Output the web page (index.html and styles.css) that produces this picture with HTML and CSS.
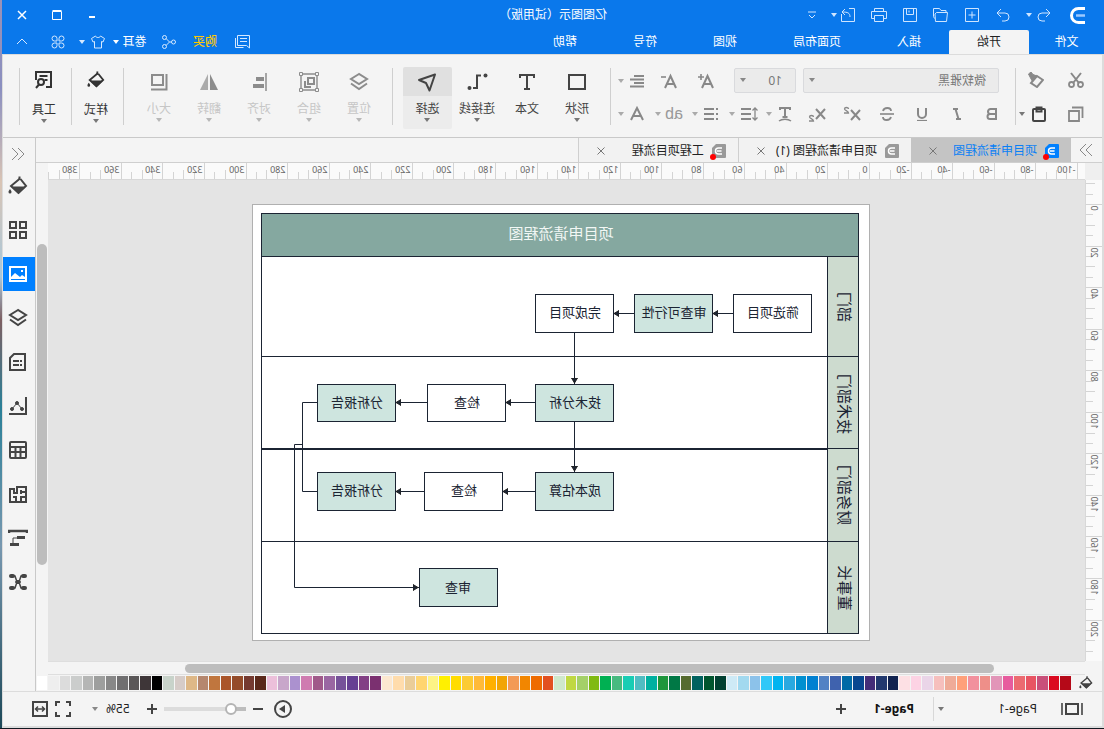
FILE: index.html
```html
<!DOCTYPE html>
<html lang="zh-CN">
<head>
<meta charset="utf-8">
<title>亿图图示（试用版）</title>
<link rel="stylesheet" href="styles.css">
</head>
<body>
<svg class="defs" aria-hidden="true">
  <symbol id="caret" viewBox="0 0 6 4"><path d="M0 0h6L3 4z" fill="currentColor"/></symbol>
  <symbol id="bucket" viewBox="0 0 20 20"><path d="M7.500 3L2 10l7.500 7L17 10 8 2.500" fill="none" stroke="currentColor" stroke-width="2"/><path d="M2 10.500h15l-7.500 7.500z" fill="currentColor"/><path d="M8.500 4V.5" stroke="currentColor" stroke-width="2"/><path d="M18 13c1 1.500 1.500 2 1.500 3a1.500 1.500 0 0 1-3 0c0-1 .5-1.500 1.500-3z" fill="currentColor"/></symbol>
  <symbol id="layers" viewBox="0 0 20 20"><path d="M10 2l8 5-8 5-8-5zM2 11.500l8 5.500 8-5.500" fill="none" stroke="currentColor" stroke-width="2"/></symbol>
  <symbol id="doc" viewBox="0 0 14 14"><path d="M1 0h9l4 4v9a1 1 0 0 1-1 1H1a1 1 0 0 1-1-1V1a1 1 0 0 1 1-1z" fill="currentColor"/><path d="M4 4h3.500a3 3 0 0 1 0 6H4M4.500 7H9" fill="none" stroke="#fff" stroke-width="1.500"/></symbol>
</svg>

<div class="app">
  <header class="top">
    <div class="titlebar">
      <div class="quick">
        <svg class="logo" viewBox="0 0 16 17"><path d="M1 1.500h6.500a7 7 0 0 1 0 14H1" fill="none" stroke="#fff" stroke-width="3"/><path d="M1 8.500h9" stroke="#9cc9ff" stroke-width="2.500"/></svg>
        <button class="qa narrow" aria-label="撤销"><svg class="i14" viewBox="0 0 14 14"><path d="M5 1L1 5l4 4M1 5h8a4 4 0 0 1 0 8H6"/></svg></button>
        <button class="mini" aria-label="撤销列表"><svg class="caret"><use href="#caret"/></svg></button>
        <button class="qa first" aria-label="恢复"><svg class="i14" viewBox="0 0 14 14"><path d="M9 1l4 4-4 4M13 5H5a4 4 0 0 0 0 8h3"/></svg></button>
        <button class="qa" aria-label="新建"><svg class="i14" viewBox="0 0 14 14"><path d="M.5.5h13v13H.5zM7 3.500v7M3.500 7h7"/></svg></button>
        <button class="qa" aria-label="打开"><svg class="i16" viewBox="0 0 16 14"><path d="M1.500 4.500h11l1.500 1.500-.5 7.500h-11zM3 4.500V2.500h5l1.500-2h6v8l-1 2"/></svg></button>
        <button class="qa" aria-label="保存"><svg class="i14" viewBox="0 0 14 14"><path d="M.5.5h13v13H.5zM3.500.5v6h7v-6M8 2.500v2"/></svg></button>
        <button class="qa" aria-label="打印"><svg class="i16" viewBox="0 0 16 14"><path d="M3.500 3.500v-3h9v3M3.500 10.500h-3v-7h15v7h-3M3.500 7.500h9v6h-9z"/></svg></button>
        <button class="qa" aria-label="导出"><svg class="i14" viewBox="0 0 14 14"><path d="M6 .5H.5v13h13V6M5 9c0-4 2-5 8-5M10 1l3 3-3 3"/></svg></button>
        <button class="mini after" aria-label="导出列表"><svg class="caret"><use href="#caret"/></svg></button>
        <button class="qa" aria-label="自定义"><svg class="i8" viewBox="0 0 8 8"><path d="M0 1h8M1 4l3 3 3-3"/></svg></button>
      </div>
      <h1 class="title">亿图图示（试用版）</h1>
      <div class="window">
        <button aria-label="最小化"><svg class="i10" viewBox="0 0 10 10"><path d="M2 7h6" stroke-width="2"/></svg></button>
        <button aria-label="最大化"><svg class="i10" viewBox="0 0 10 10"><path d="M.5 1.500h9v8h-9zM.5.5h9"/></svg></button>
        <button aria-label="关闭"><svg class="i10" viewBox="0 0 10 10"><path d="M1 1l8 8M9 1L1 9" stroke-width="1.500"/></svg></button>
      </div>
    </div>
    <nav class="menubar">
      <button class="file">文件</button>
      <button class="active">开始</button>
      <button>插入</button>
      <button>页面布局</button>
      <button>视图</button>
      <button>符号</button>
      <button>帮助</button>
      <div class="account">
        <button class="w28" aria-label="消息"><svg class="i16" viewBox="0 0 16 14"><path d="M.5.5h12v10h-9l-3 2.500zM3 3.500h7M3 6.500h7M14.500 3v9.500h-8"/></svg></button>
        <button class="buy">购买</button>
        <button class="w26" aria-label="分享"><svg class="i14" viewBox="0 0 14 14"><circle cx="2.500" cy="7" r="2"/><circle cx="11.500" cy="2.500" r="2"/><circle cx="11.500" cy="11.500" r="2"/><path d="M4.500 7h2l3.500-3.500M6.500 7L10 10.500"/></svg></button>
        <button class="user">卷耳<svg class="caret"><use href="#caret"/></svg></button>
        <button class="w20" aria-label="皮肤"><svg class="i14" viewBox="0 0 14 14"><path d="M4.500 1L.5 3.500 2 7l1.500-.5V13h7V6.500L12 7l1.500-3.500-4-2.500C9 3 5 3 4.500 1z"/></svg></button>
        <button class="w12" aria-label="皮肤列表"><svg class="caret"><use href="#caret"/></svg></button>
        <button class="w36" aria-label="应用"><svg class="i14" viewBox="0 0 14 14"><path d="M6 6H3.500A2.500 2.500 0 1 1 6 3.500zM8 6V3.500A2.500 2.500 0 1 1 10.500 6zM6 8v2.500A2.500 2.500 0 1 1 3.500 8zM8 8h2.500A2.500 2.500 0 1 1 8 10.500z"/></svg></button>
        <button class="w36" aria-label="收起功能区"><svg class="i10" viewBox="0 0 10 10"><path d="M0 7l5-5 5 5"/></svg></button>
      </div>
    </nav>
  </header>

  <div class="frame">
    <section class="ribbon">
      <div class="clip">
        <button aria-label="剪切"><svg class="i16" viewBox="0 0 16 16"><path d="M3 1l7.500 9.500M13 1L5.500 10.500" stroke-width="2"/><circle cx="3.500" cy="12.500" r="2.500" stroke-width="1.800"/><circle cx="12.500" cy="12.500" r="2.500" stroke-width="1.800"/></svg></button>
        <button aria-label="格式刷"><svg class="i16" viewBox="0 0 16 16"><path d="M1 8l6-4 6 7-6 4z" stroke-width="2"/><path d="M7 4l4.500 5.500L14 5l1.500-3L13 0l-2 2.500z" fill="currentColor"/></svg></button>
        <button aria-label="复制"><svg class="i16" viewBox="0 0 16 16"><path d="M5 5h10v10H5zM1.500 12V1.500H12" stroke-width="1.800"/></svg></button>
        <button class="paste" aria-label="粘贴"><svg class="i16" viewBox="0 0 16 16"><rect x="2" y="3" width="12" height="12" rx="1" stroke-width="2"/><path d="M5.500 1.500h5v4h-5z" stroke-width="2"/></svg><svg class="caret"><use href="#caret"/></svg></button>
      </div>
      <i class="sep"></i>
      <div class="fonts">
        <div class="row one">
          <label class="combo wide"><select aria-label="字体"><option>微软雅黑</option></select><svg class="caret"><use href="#caret"/></svg></label>
          <label class="combo size"><select aria-label="字号"><option>10</option></select><svg class="caret"><use href="#caret"/></svg></label>
          <button class="w37" aria-label="增大字号"><svg class="i16" viewBox="0 0 16 16"><path d="M1 15L6.500 3 12 15M3 11h7" stroke-width="2"/><path d="M13 1v6M10 4h6" stroke-width="1.600"/></svg></button>
          <button class="w37" aria-label="减小字号"><svg class="i16" viewBox="0 0 16 16"><path d="M1 15L6.500 3 12 15M3 11h7" stroke-width="2"/><path d="M11 4h5" stroke-width="1.600"/></svg></button>
          <button class="dd" aria-label="对齐方式"><svg class="i16" viewBox="0 0 16 16"><path d="M1 3h10M1 6.500h14M1 10h10M1 13.500h14" stroke-width="1.800"/></svg><svg class="caret"><use href="#caret"/></svg></button>
        </div>
        <div class="row two">
          <button class="w35" aria-label="加粗"><svg class="i14" viewBox="0 0 14 14"><path d="M3 2h5.500a2.500 2.500 0 0 1 0 5H3zM3 7h6a2.500 2.500 0 0 1 0 5H3z" stroke-width="2"/></svg></button>
          <button class="w35" aria-label="倾斜"><svg class="i14" viewBox="0 0 14 14"><path d="M6 2h5M3 12h5M8.500 2l-3 10" stroke-width="2"/></svg></button>
          <button class="w35" aria-label="下划线"><svg class="i14" viewBox="0 0 14 14"><path d="M3 1v6a4 4 0 0 0 8 0V1" stroke-width="2"/><path d="M2 13.500h10" stroke-width="1.200"/></svg></button>
          <button class="w35" aria-label="删除线"><svg class="i14" viewBox="0 0 14 14"><path d="M11 4c-1-4-8-4-8 0M3 10c1 4 8 4 8 0" stroke-width="1.800"/><path d="M0 7h14" stroke-width="1.600"/></svg></button>
          <button class="w35" aria-label="上标"><svg class="i18" viewBox="0 0 18 16"><path d="M1 4l9 10M10 4L1 14" stroke-width="2"/><path d="M12.500 3c0-2 4-2 4 0 0 1.500-4 2-4 4H17" stroke-width="1.300"/></svg></button>
          <button class="w35" aria-label="下标"><svg class="i18" viewBox="0 0 18 16"><path d="M1 3l9 10M10 3L1 13" stroke-width="2"/><path d="M12.500 11c0-2 4-2 4 0 0 1.500-4 2-4 4H17" stroke-width="1.300"/></svg></button>
          <button class="dd start" aria-label="文字方向"><svg class="i16" viewBox="0 0 16 16"><path d="M3 4V2h10v2M8 2v9M5.500 11h5" stroke-width="2"/><path d="M2 15c3-2.500 9-2.500 12 0" stroke-width="1.500"/></svg><svg class="caret"><use href="#caret"/></svg></button>
          <button class="dd" aria-label="行距"><svg class="i18" viewBox="0 0 18 16"><path d="M7 3h10M7 8h10M7 13h10" stroke-width="2"/><path d="M3 2v12M.5 4.500L3 2l2.500 2.500M.5 11.500L3 14l2.500-2.500" stroke-width="1.300"/></svg><svg class="caret"><use href="#caret"/></svg></button>
          <button class="dd" aria-label="项目符号"><svg class="i16" viewBox="0 0 16 16"><path d="M5 3h10M5 8h10M5 13h10M1 3h2M1 8h2M1 13h2" stroke-width="2"/></svg><svg class="caret"><use href="#caret"/></svg></button>
          <button class="dd ab">ab<svg class="caret"><use href="#caret"/></svg></button>
          <button class="dd" aria-label="字体颜色"><svg class="i16" viewBox="0 0 16 16"><path d="M2 14L8 2l6 12M4.500 10h7" stroke-width="2"/></svg><svg class="caret"><use href="#caret"/></svg></button>
        </div>
      </div>
      <i class="sep"></i>
      <div class="bigs">
        <button class="big"><svg class="i20" viewBox="0 0 20 20"><path d="M2 3h16v14H2z" stroke-width="2"/></svg>形状<svg class="caret"><use href="#caret"/></svg></button>
        <button class="big"><svg class="i20" viewBox="0 0 20 20"><path d="M3 6V3h14v3M10 3v14M7 17h6" stroke-width="2"/></svg>文本</button>
        <button class="big"><svg class="i22" viewBox="0 0 22 20"><circle cx="2.500" cy="3.500" r="2" fill="currentColor" stroke="none"/><circle cx="18.500" cy="16" r="2" fill="currentColor" stroke="none"/><path d="M7 3.500h4V16h4" stroke-width="2"/></svg>连接线<svg class="caret"><use href="#caret"/></svg></button>
        <button class="big on"><svg class="i20" viewBox="0 0 20 20"><path d="M2 2.500l16 5.500-7 3-3.500 7.500z" stroke-width="2" stroke-linejoin="round"/></svg>选择<svg class="caret"><use href="#caret"/></svg></button>
      </div>
      <i class="sep gap"></i>
      <div class="bigs">
        <button class="big" disabled><svg class="i20" viewBox="0 0 20 20"><use href="#layers"/></svg>位置<svg class="caret"><use href="#caret"/></svg></button>
        <button class="big" disabled><svg class="i20" viewBox="0 0 20 20"><path d="M2 2h16v16H2z" stroke-width="1.400"/><path d="M5 6h6v6H5z" stroke-width="2"/><path d="M14 9v6H8" stroke-width="2"/><path d="M.5.5h3v3h-3zM16.500.5h3v3h-3zM.5 16.500h3v3h-3zM16.500 16.500h3v3h-3z" fill="#f4f4f4"/></svg>组合<svg class="caret"><use href="#caret"/></svg></button>
        <button class="big" disabled><svg class="i20" viewBox="0 0 20 20"><path d="M3 1v18" stroke-width="1.500"/><path d="M5 5h8v4H5zM5 12h11v4H5z" fill="currentColor" stroke="none"/></svg>对齐<svg class="caret"><use href="#caret"/></svg></button>
        <button class="big" disabled><svg class="i20" viewBox="0 0 20 20"><path d="M9 2v16H1z" fill="currentColor" stroke="none"/><path d="M11 2v16h8z" fill="currentColor" stroke="none" opacity=".7"/></svg>翻转<svg class="caret"><use href="#caret"/></svg></button>
        <button class="big" disabled><svg class="i20" viewBox="0 0 20 20"><path d="M6 3h11v10H6z" stroke-width="2"/><path d="M2.500 2v15.500H18" stroke-width="2"/></svg>大小<svg class="caret"><use href="#caret"/></svg></button>
      </div>
      <i class="sep gap"></i>
      <button class="big solo"><svg class="i18"><use href="#bucket"/></svg>样式<svg class="caret"><use href="#caret"/></svg></button>
      <i class="sep"></i>
      <button class="big solo"><svg class="i20" viewBox="0 0 20 20"><path d="M8 17H3V2h15v8M6.500 6h8M6.500 10h3" stroke-width="2"/><circle cx="13" cy="12" r="3" stroke-width="2"/><path d="M15 14.500l3 3.500" stroke-width="2"/></svg>工具<svg class="caret"><use href="#caret"/></svg></button>
      <i class="sep"></i>
    </section>

    <div class="middle">
      <main class="work">
        <div class="tabs">
          <button class="fold" aria-label="展开符号库"><svg class="i14" viewBox="0 0 14 14"><path d="M1 1l6 6-6 6M7 1l6 6-6 6"/></svg></button>
          <div class="tab current"><svg class="i14 doc"><use href="#doc"/></svg><i class="dot"></i><span>项目申请流程图</span><button aria-label="关闭标签"><svg class="i8" viewBox="0 0 8 8"><path d="M.5.5l7 7M7.500.5l-7 7"/></svg></button></div>
          <div class="tab"><svg class="i14 doc"><use href="#doc"/></svg><span>项目申请流程图 (1)</span><button aria-label="关闭标签"><svg class="i8" viewBox="0 0 8 8"><path d="M.5.5l7 7M7.500.5l-7 7"/></svg></button></div>
          <div class="tab third"><svg class="i14 doc"><use href="#doc"/></svg><i class="dot"></i><span>工程项目流程</span><button aria-label="关闭标签"><svg class="i8" viewBox="0 0 8 8"><path d="M.5.5l7 7M7.500.5l-7 7"/></svg></button></div>
        </div>
        <div class="board">
          <div class="corner"></div>
          <svg class="ruler-x" id="rulerX"></svg>
          <div class="vscroll"><i></i></div>
          <svg class="ruler-y" id="rulerY"></svg>
          <div class="canvas">
            <svg class="page" viewBox="234 204 618 437">
              <defs><marker id="arrow" markerWidth="6" markerHeight="8" refX="6" refY="4" orient="auto" markerUnits="userSpaceOnUse"><path d="M0 1l5 3-5 3z" fill="#1b2433"/></marker></defs>
              <g class="lane">
                <rect class="head" x="245.500" y="213.500" width="597" height="43"/>
                <rect class="name" x="245.500" y="256.500" width="31" height="377"/>
                <rect class="none" x="245.500" y="256.500" width="597" height="377"/>
                <path d="M245.500 356.500h597M245.500 448.500h597M245.500 541.500h597"/>
                <path d="M277 449h566" stroke-width="2"/>
              </g>
              <text class="head-text" x="543" y="239">项目申请流程图</text>
              <g class="lane-text">
                <text transform="translate(265 307) rotate(-90)">部门</text>
                <text transform="translate(265 404) rotate(-90)">技术部门</text>
                <text transform="translate(265 495) rotate(-90)">财务部门</text>
                <text transform="translate(265 588) rotate(-90)">董事长</text>
              </g>
              <g class="link">
                <path d="M787 402.500h14.500v89H787"/>
                <path class="tip" d="M371 313.500h21"/><path class="tip" d="M470 313.500h21"/>
                <path class="tip" d="M529.500 332v52"/><path class="tip" d="M529.500 421v51"/>
                <path class="tip" d="M569 402.500h30"/><path class="tip" d="M677 402.500h32"/>
                <path class="tip" d="M569 491.500h33"/><path class="tip" d="M680 491.500h29"/>
                <path class="tip" d="M801.500 444.500h8v143H685"/>
              </g>
              <g class="node">
                <rect x="292.500" y="294.500" width="78" height="38"/><text x="331" y="317">筛选项目</text>
                <rect class="green" x="391.500" y="294.500" width="78" height="38"/><text x="430" y="317">审查可行性</text>
                <rect x="490.500" y="294.500" width="78" height="38"/><text x="529" y="317">完成项目</text>
                <rect class="green" x="490.500" y="384.500" width="78" height="37"/><text x="529" y="407">技术分析</text>
                <rect x="598.500" y="384.500" width="78" height="37"/><text x="637" y="407">检查</text>
                <rect class="green" x="708.500" y="384.500" width="78" height="37"/><text x="747" y="407">分析报告</text>
                <rect class="green" x="490.500" y="472.500" width="78" height="38"/><text x="529" y="495">成本估算</text>
                <rect x="601.500" y="472.500" width="78" height="38"/><text x="640" y="495">检查</text>
                <rect class="green" x="708.500" y="472.500" width="78" height="38"/><text x="747" y="495">分析报告</text>
                <rect class="green" x="606.500" y="568.500" width="78" height="38"/><text x="646" y="592">审查</text>
              </g>
            </svg>
          </div>
        </div>
        <div class="hscroll"><i></i></div>
        <div class="palette"><button class="fill" aria-label="填充"><svg class="i14"><use href="#bucket"/></svg></button><div class="swatches" id="swatches"></div></div>
      </main>

      <aside class="side">
        <button class="small" aria-label="收起面板"><svg class="i14" viewBox="0 0 14 14"><path d="M7 1L1 7l6 6M13 1L7 7l6 6"/></svg></button>
        <button aria-label="填充"><svg class="i20"><use href="#bucket"/></svg></button>
        <button aria-label="符号库"><svg class="i20" viewBox="0 0 20 20"><path d="M2 2h6v6H2zM12 2h6v6h-6zM2 12h6v6H2zM12 12h6v6h-6z" stroke-width="2"/></svg></button>
        <button class="active" aria-label="图片"><svg class="i20" viewBox="0 0 20 20"><path d="M2 3h16v14H2z" stroke-width="2"/><path d="M3 15v-2l3-2 2 2 5-4 4 4v2z" fill="currentColor" stroke="none"/><path d="M5 6h2v2H5z" fill="currentColor" stroke="none"/></svg></button>
        <button aria-label="图层"><svg class="i20"><use href="#layers"/></svg></button>
        <button aria-label="页面"><svg class="i20" viewBox="0 0 20 20"><path d="M3 2h11l4 4v12H3z" stroke-width="2"/><path d="M6 9h2M9 9h6M6 13h2M9 13h6" stroke-width="2"/></svg></button>
        <button aria-label="图表"><svg class="i20" viewBox="0 0 20 20"><path d="M2 1v17h17" stroke-width="2"/><path d="M6 13l5-6 5 6"/><circle cx="6" cy="13" r="1.500" fill="currentColor"/><circle cx="11" cy="7" r="1.500" fill="currentColor"/><circle cx="16" cy="13" r="1.500" fill="currentColor"/></svg></button>
        <button aria-label="表格"><svg class="i20" viewBox="0 0 20 20"><rect x="2" y="2" width="16" height="16" rx="1" stroke-width="2"/><path d="M2 7h16M2 12h16M7.500 7v11M12.500 7v11" stroke-width="2"/></svg></button>
        <button aria-label="平面图"><svg class="i20" viewBox="0 0 20 20"><path d="M11 3H2v15h16V5h-4v4h-3zM2 8h4M7 6v4M2 13h5v5M12 18v-6M12 13h3" stroke-width="2"/></svg></button>
        <button aria-label="甘特图"><svg class="i20" viewBox="0 0 20 20"><path d="M1 5V3h18v2" stroke-width="2.500"/><path d="M3 9.500h8M9 16.500h9" stroke-width="3"/><path d="M11 10h4v6"/></svg></button>
        <button aria-label="思维导图"><svg class="i20" viewBox="0 0 20 20"><path d="M4 4h3l2 6-2 6H4M16 4h-3l-2 6 2 6h3M7 10h6" stroke-width="1.500"/><rect x="1" y="2" width="6" height="4" rx="2" fill="currentColor" stroke="none"/><rect x="13" y="2" width="6" height="4" rx="2" fill="currentColor" stroke="none"/><rect x="1" y="14" width="6" height="4" rx="2" fill="currentColor" stroke="none"/><rect x="13" y="14" width="6" height="4" rx="2" fill="currentColor" stroke="none"/><rect x="8" y="8" width="4" height="4" fill="currentColor" stroke="none"/></svg></button>
      </aside>
    </div>

    <footer class="status">
      <button class="view" aria-label="页面视图"><svg class="i22" viewBox="0 0 22 14"><path d="M5 2h12v10H5z" stroke-width="2"/><path d="M1 1v12M21 1v12" stroke-width="1.600"/></svg></button>
      <button class="picker">Page-1<svg class="caret"><use href="#caret"/></svg></button>
      <i class="bar"></i>
      <button class="pg">Page-1</button>
      <button class="add" aria-label="添加页面"><svg class="i10" viewBox="0 0 10 10"><path d="M0 5h10M5 0v10" stroke-width="2"/></svg></button>
      <div class="zoom">
        <button aria-label="播放"><svg class="i18" viewBox="0 0 18 18"><circle cx="9" cy="9" r="8" stroke-width="2"/><path d="M7 5l6 4-6 4z" fill="currentColor" stroke="none"/></svg></button>
        <button class="minus" aria-label="缩小"><svg class="i10" viewBox="0 0 10 10"><path d="M0 5h10" stroke-width="2"/></svg></button>
        <input type="range" min="0" max="100" value="12" aria-label="缩放">
        <button class="plus" aria-label="放大"><svg class="i10" viewBox="0 0 10 10"><path d="M0 5h10M5 0v10" stroke-width="2"/></svg></button>
        <button class="pct">55%<svg class="caret"><use href="#caret"/></svg></button>
        <button class="full" aria-label="全屏"><svg class="i16" viewBox="0 0 16 16"><path d="M1 5V1h4M11 1h4v4M15 11v4h-4M5 15H1v-4" stroke-width="2"/></svg></button>
        <button aria-label="适合宽度"><svg class="i16" viewBox="0 0 16 16"><path d="M1 1h14v14H1z" stroke-width="2"/><path d="M4 8h8M6 5.500L3.500 8 6 10.500M10 5.500L12.500 8 10 10.500" stroke-width="1.500"/></svg></button>
      </div>
    </footer>
  </div>
</div>
<script src="app.js"></script>
</body>
</html>
```
FILE: styles.css
```css
* { box-sizing: border-box; }
html, body { height: 100%; margin: 0; }
body {
  overflow: hidden;
  font: 12px/16px "Noto Sans", "Noto Sans CJK SC", sans-serif;
  color: #222;
}
button {
  display: flex; align-items: center; justify-content: center;
  padding: 0; border: 0; background: none; color: inherit; font: inherit;
  flex-shrink: 0;
}
svg { display: block; flex-shrink: 0; fill: none; stroke: currentColor; }
.defs { position: absolute; width: 0; height: 0; }
.caret { width: 6px; height: 4px; stroke: none; }
use { stroke: none; }
.i8 { width: 8px; height: 8px; }
.i10 { width: 10px; height: 10px; }
.i14 { width: 14px; height: 14px; }
.i16 { width: 16px; height: 16px; }
.i18 { width: 18px; height: 18px; overflow: visible; }
.i20 { width: 20px; height: 20px; }
.i22 { width: 22px; height: 20px; }

/* The whole window is shown flipped, as a right-to-left mirror. */
.app {
  display: flex; flex-direction: column; height: 100vh;
  padding-right: 2px;
  border-bottom: 1px solid #101820;
  background: linear-gradient(#9a92b8, #8a8fc0 12%, #d9c4b4 25%, #a8c8dc 38%, #7d5f62 44%, #2a8098 56%, #7898b0 75%, #1c4858);
  transform: scaleX(-1);
}

.top { background: #0a78eb; color: #fff; }
.titlebar { display: grid; grid-template-columns: 1fr auto 1fr; align-items: center; height: 30px; }
.quick { display: flex; align-items: center; color: #cfe5ff; }
.logo { width: 16px; height: 17px; margin: 0 16px 0 18px; }
.qa { width: 31px; height: 28px; }
.qa.narrow { width: 20px; }
.qa.first { margin-left: 5px; }
.mini { width: 10px; height: 28px; }
.mini.after { margin: 0 1px 0 -6px; }
.title { margin: 0; font-size: 12px; font-weight: 400; }
.window { display: flex; justify-content: flex-end; }
.window button { width: 35px; height: 28px; }
.window button:last-child { margin-right: 3px; }
.menubar { display: flex; height: 24px; }
.menubar button { padding: 0 28px; }
.menubar .file { width: 75px; padding: 0; }
.menubar .active { background: #f4f4f4; color: #222; border-radius: 2px 2px 0 0; }
.account { display: flex; margin-left: auto; padding-right: 2px; color: #d6e9ff; }
.account button { padding: 0; }
.account .buy { width: 46px; color: #ffc800; font-weight: 500; }
.account .user { width: 48px; padding-left: 4px; gap: 3px; color: #fff; }
.w12 { width: 12px; } .w20 { width: 20px; } .w26 { width: 26px; } .w28 { width: 28px; }
.w35 { width: 35px; } .w36 { width: 36px; } .w37 { width: 37px; }

.frame {
  display: flex; flex-direction: column; flex: 1; min-height: 0;
  border: solid #dcdcdc; border-width: 0 1px 2px 2px;
  background: #f4f4f4;
}

.ribbon { display: flex; height: 84px; border-top: 1px solid #dcdcdc; border-bottom: 1px solid #c9c9c9; color: #888; }
.sep { width: 1px; height: 57px; margin-top: 13px; background: #cfcfcf; flex-shrink: 0; }
.sep.gap { margin-left: 10px; }
.clip { display: grid; grid-template-columns: 40px 40px; grid-template-rows: 34px 34px; padding: 8px 0 0 6px; }
.clip .paste { gap: 6px; color: #444; padding-left: 5px; }
.paste .caret { color: #777; }
.fonts { width: 404px; padding-top: 13px; }
.row { display: flex; align-items: center; height: 25px; }
.row.one { padding-left: 16px; }
.row.two { height: 24px; margin-top: 9px; padding-left: 5px; }
.combo { position: relative; height: 25px; }
.combo select {
  width: 100%; height: 100%; padding: 0 12px; appearance: none;
  border: 1px solid #d9dadd; border-radius: 2px; background: #ebebeb;
  color: #777; font: inherit;
}
.combo .caret { position: absolute; right: 6px; top: 10px; }
.combo.wide { width: 196px; margin-right: 7px; }
.combo.size { width: 62px; margin-right: 9px; }
.combo.size select { padding: 0 13px; }
.dd { width: 32px; height: 24px; margin-right: 5px; }
.dd .caret { margin-left: auto; color: #aaa; }
.dd > svg:first-child { margin-left: 5px; }
.dd > .i18:first-child { margin-left: 3px; }
.row.one .dd { margin-left: 1px; }
.dd.start { margin-left: 2px; }
.dd.ab { font: 16px/20px "Liberation Sans", sans-serif; padding-left: 4px; color: #999; }
.dd.ab .caret { margin-left: auto; }
.bigs { display: flex; padding-left: 8px; }
.big {
  flex-direction: column; justify-content: flex-start; width: 50px; height: 62px;
  margin-top: 12px; padding-top: 5px; color: #444; line-height: 16px;
}
.big > svg:first-child { height: 20px; margin-bottom: 9px; }
.big .caret { margin-top: 1px; color: #777; }
.big.on { width: 49px; background: linear-gradient(#e0e0e0 29px, #ececec 29px); border-radius: 2px; }
.big:disabled { color: #c6c6c6; }
.big:disabled > svg:first-child { color: #8c8c8c; }
.big:disabled .caret { color: #b8b8b8; }
.big.solo { width: 51px; height: 64px; padding: 3px 0 0 3px; color: #333; }
.big.solo > svg:first-child { margin-bottom: 12px; }

.middle { display: flex; flex: 1; min-height: 0; }
.work { display: flex; flex-direction: column; flex: 1; min-width: 0; }
.tabs { display: flex; height: 25px; border-bottom: 1px solid #cfcfcf; }
.fold { width: 31px; color: #888; }
.tab { position: relative; display: flex; align-items: center; padding: 1px 14px 0 12px; border-right: 1px solid #cfcfcf; background: #f2f2f2; }
.tab .doc { margin-right: 8px; color: #999; }
.tab span { white-space: nowrap; margin-right: 7px; }
.tab button { width: 16px; height: 20px; color: #777; }
.tab.current { background: #c4c4c4; border: 0; color: #0a80f5; }
.tab.current .doc { color: #0080ff; }
.tab.current span { margin-right: 12px; }
.tab.third span { margin-right: 23px; }
.dot { position: absolute; left: 22px; bottom: 2px; width: 6px; height: 6px; border-radius: 3px; background: #f00; }

.board { display: grid; grid-template: 17px 1fr / 17px 1fr 12px; flex: 1; min-height: 0; }
.corner { background: #efefef; }
.ruler-x { width: 100%; height: 17px; background: #fafafa; border-bottom: 1px solid #d8d8d8; }
.ruler-y { width: 17px; height: 100%; grid-column: 1; grid-row: 2; background: #fafafa; border-right: 1px solid #d8d8d8; }
.ruler-x path, .ruler-y path { stroke: #d4d4d4; }
.ruler-x text, .ruler-y text { font-size: 9px; fill: #666; stroke: none; }
.vscroll { grid-column: 3; grid-row: 1 / 3; padding: 81px 1px 0; background: #f4f4f4; }
.vscroll i { display: block; height: 321px; border-radius: 5px; background: #bdbdbd; }
.canvas { grid-column: 2; grid-row: 2; overflow: hidden; padding: 24px 0 0 215px; background: #e4e4e4; }
.page { width: 618px; height: 437px; background: #fff; outline: 1px solid #b0b0b0; outline-offset: -1px; }
.page rect { fill: #fff; }
.page text { stroke: none; text-anchor: middle; fill: #1b2433; }
.lane { stroke: #1b2433; }
.page .lane .none { fill: none; }
.page .lane .head { fill: #85a8a0; }
.page .lane .name { fill: #cddbcf; }
.page .head-text { font-size: 15px; fill: #f2f7f5; }
.lane-text { font-size: 15px; }
.link { stroke: #1b2433; }
.link .tip { marker-end: url(#arrow); }
.node { font-size: 13px; stroke: #1b2433; }
.page .node .green { fill: #cee5df; }

.hscroll { height: 14px; margin: 0 12px 0 17px; padding: 2px 137px 0 91px; border: solid #dedede; border-width: 1px 0; }
.hscroll i { display: block; height: 9px; border-radius: 5px; background: #bdbdbd; }
.palette { display: flex; height: 16px; padding: 1px 1px 1px 0; }
.fill { width: 31px; color: #444; }
.swatches { display: flex; flex: 1; gap: 1px; }
.swatches span { flex: 1; }

.side { display: flex; flex-direction: column; width: 33px; border-left: 1px solid #c9c9c9; color: #444; }
.side button { height: 34px; margin-bottom: 10px; padding-left: 2px; }
.side .small { height: 31px; margin-bottom: 0; color: #888; }
.side .active { background: #0080ff; color: #fff; }

.status { display: flex; align-items: center; height: 35px; border-top: 1px solid #dcdcdc; color: #444; }
.status .view { width: 60px; }
.status .i22 { height: 14px; }
.picker { width: 104px; padding: 0 0 0 5px; justify-content: flex-start; color: #222; }
.picker .caret { margin-left: auto; color: #777; }
.bar { width: 1px; height: 24px; margin-left: 4px; background: #d8d8d8; }
.pg { margin-left: 19px; font-weight: 700; color: #111; }
.add { margin-left: 28px; }
.zoom { display: flex; align-items: center; margin-left: auto; padding-right: 29px; }
.minus { margin: 0 7px 0 11px; }
.plus { margin-left: 7px; }
.pct { margin: 0 21px 0 17px; gap: 8px; color: #222; }
.pct .caret { color: #888; }
.full { margin-right: 7px; }
input[type="range"] {
  width: 82px; height: 14px; margin: 0; appearance: none;
  background: linear-gradient(90deg, #bdbdbd 14px, #dcdcdc 14px) center / 100% 4px no-repeat;
}
input[type="range"]::-webkit-slider-thumb {
  appearance: none; width: 12px; height: 12px; border: 2px solid #b4b4b4; border-radius: 50%; background: #fff;
}
```
FILE: app.js
```js
const PX = 2.078;
const colors = ("b50918 db0a20 c9507a e85563 ec6b71 e75c9e e295b8 ee8f89 f2909d ffa07a efab98 f6bfbd ead5e8 fdd3e4 fde0e4 " +
  "102250 21386e 432d78 08468f 006aa6 3f62ae 5282c4 0080d1 008fd0 2aa9e0 00b4f0 30c8f8 8cc2ea a2d9ef ceeaf6 " +
  "004031 00552e 00625f 556b2f 007845 1e963c 00b0a0 50bdc2 19cdb4 48ba80 00b052 80ba12 a4d068 c0d842 cfe8cb " +
  "e25020 ee6b00 f28600 f39a55 f2a504 ffb000 ffba38 fccb34 ffdc00 fff000 fdf385 ffd570 eacd98 ffdcac fce8d0 " +
  "7b3070 834085 664093 765299 9a67a2 a05a8a cf7bb0 ab91cf c8a6ca ecc0da 5a281a 753a30 944c2a aa552a c0763e " +
  "b5876e deb887 d6ccc8 c8d3ca 000000 3e3638 5a5758 706f70 888888 9e9f9e b5b6b5 cbcdcc dcdcdc eeeeee ffffff").split(" ");
document.getElementById("swatches").innerHTML =
  colors.map(c => `<span style="background:#${c}"></span>`).join("");

// origin: position of the zero mark, in pixels from the start of the ruler
function ruler(el, origin, from, to, vertical) {
  let d = "", labels = "";
  for (let v = from; v <= to; v += 5) {
    const p = Math.round(origin + v * PX) + 0.5;
    const major = v % 20 === 0;
    const len = major ? 17 : v % 10 === 0 ? 9 : 7;
    d += vertical ? `M16 ${p}h${-len}` : `M${p} 16v${-len}`;
    if (major) {
      labels += vertical
        ? `<text text-anchor="end" transform="translate(11 ${p + 1}) rotate(-90)">${v}</text>`
        : `<text x="${p + 2}" y="10">${v}</text>`;
    }
  }
  el.innerHTML = `<path d="${d}"/>${labels}`;
}
ruler(document.getElementById("rulerX"), 215, -100, 395, false);
ruler(document.getElementById("rulerY"), 24, -10, 215, true);
```
